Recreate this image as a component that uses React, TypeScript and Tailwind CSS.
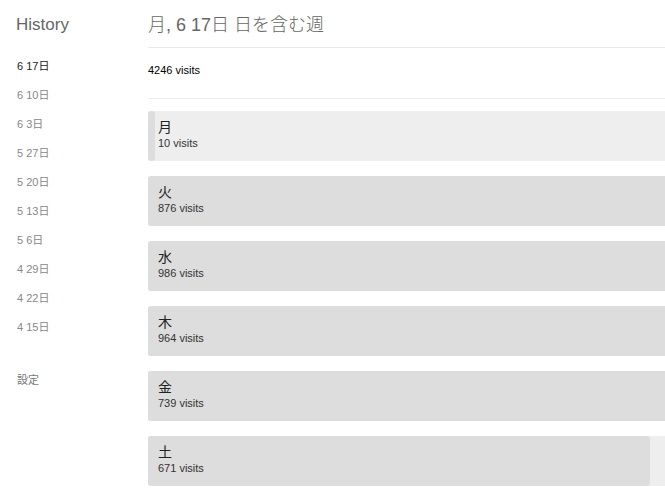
import React from "react";

const weeks = ["6 17日", "6 10日", "6 3日", "5 27日", "5 20日", "5 13日", "5 6日", "4 29日", "4 22日", "4 15日"];
const days = [
  { d: "月", v: 10 },
  { d: "火", v: 876 },
  { d: "水", v: 986 },
  { d: "木", v: 964 },
  { d: "金", v: 739 },
  { d: "土", v: 671 },
];
const MAX = 986;
const FULL = 737;

export default function App() {
  return (
    <div
      className="flex w-full h-screen overflow-hidden bg-white"
      style={{ fontFamily: '"Liberation Sans", Arial, "Noto Sans CJK JP", sans-serif' }}
    >
      <aside className="w-[148px] shrink-0 pl-[16px]">
        <div className="pt-[13px] text-[17px] leading-[24px] text-[#666] font-light">History</div>
        <ul className="mt-[22px] flex flex-col">
          {weeks.map((w, i) => (
            <li
              key={w}
              className={`h-[29px] leading-[14px] pl-[1px] text-[11px] ${i === 0 ? "text-[#222]" : "text-[#888]"}`}
            >
              {w}
            </li>
          ))}
        </ul>
        <div className="mt-[24px] pl-[1px] text-[11px] leading-[14px] text-[#777]">設定</div>
      </aside>
      <main className="flex-1 min-w-0">
        <h1 className="pt-[12px] h-[47px] text-[18px] leading-[26px] text-[#666] font-light">
          月, 6 17日 日を含む週
        </h1>
        <div className="border-t border-[#eaeaea] h-[51px] pb-[5px] flex items-center text-[11px] text-black">
          4246 visits
        </div>
        <div className="border-t border-[#eaeaea] pt-[12px] flex flex-col gap-[15px]">
          {days.map((x) => (
            <div key={x.d} className="relative h-[50px] w-[737px] shrink-0 rounded-[3px] bg-[#eeeeee]">
              <div
                className="absolute left-0 top-0 bottom-0 rounded-[3px] bg-[#dddddd]"
                style={{ width: Math.round((x.v / MAX) * FULL) }}
              />
              <div className="relative pl-[10px] pt-[7px]">
                <div className="text-[14px] leading-[18px] text-[#222]">{x.d}</div>
                <div className="text-[11px] leading-[14px] text-[#333]">{x.v} visits</div>
              </div>
            </div>
          ))}
        </div>
      </main>
    </div>
  );
}
